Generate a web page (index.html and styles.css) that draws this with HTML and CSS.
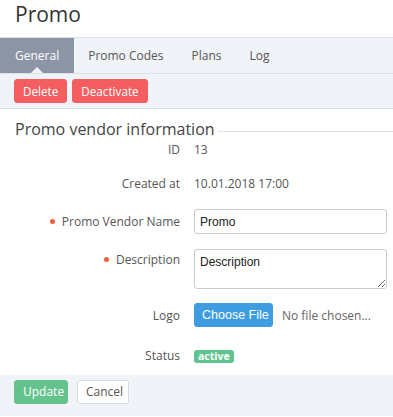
FILE: index.html
```html
<!DOCTYPE html>
<html lang="en">
<head>
    <meta charset="UTF-8">
    <meta name="viewport" content="width=device-width, initial-scale=1.0">
    <title>Promo</title>
    <link rel="stylesheet" href="styles.css">
</head>
<body>
    <h1 class="page-title">Promo</h1>

    <div class="tabs">
        <a class="tab active">General</a>
        <a class="tab">Promo Codes</a>
        <a class="tab">Plans</a>
        <a class="tab">Log</a>
    </div>

    <div class="toolbar">
        <button class="btn btn-red">Delete</button>
        <button class="btn btn-red">Deactivate</button>
    </div>

    <form class="form">
        <h3 class="section-title"><span>Promo vendor information</span></h3>

        <div class="row row-text">
            <label>ID</label>
            <div class="value">13</div>
        </div>
        <div class="row row-text">
            <label>Created at</label>
            <div class="value">10.01.2018 17:00</div>
        </div>
        <div class="row row-input">
            <label class="required">Promo Vendor Name</label>
            <div class="value"><input type="text" value="Promo"></div>
        </div>
        <div class="row row-area">
            <label class="required">Description</label>
            <div class="value"><textarea>Description</textarea></div>
        </div>
        <div class="row row-file">
            <label>Logo</label>
            <div class="value">
                <span class="btn btn-blue">Choose File</span>
                <span class="file-name">No file chosen...</span>
            </div>
        </div>
        <div class="row row-status">
            <label>Status</label>
            <div class="value"><span class="badge">active</span></div>
        </div>
    </form>

    <div class="footer">
        <button class="btn btn-green">Update</button>
        <button class="btn btn-white">Cancel</button>
    </div>
</body>
</html>
```

FILE: styles.css
```css
* {
    margin: 0;
    padding: 0;
    box-sizing: border-box;
}

body {
    font-family: "Open Sans", sans-serif;
    font-size: 12px;
    color: #555;
    background: #fff;
}

.page-title {
    font-size: 21px;
    font-weight: normal;
    color: #333;
    height: 38px;
    line-height: 29px;
    padding-left: 15px;
    border-bottom: 1px solid #dde1e6;
}

.tabs {
    display: flex;
    height: 36px;
    background: #f0f3f7;
    border-bottom: 1px solid #dde1e6;
}

.tab {
    position: relative;
    padding: 0 14px;
    line-height: 35px;
    color: #555;
}

.tab.active {
    background: #8c95a5;
    color: #fff;
    padding: 0 15px;
}

.tab.active::after {
    content: "";
    position: absolute;
    left: 50%;
    bottom: 0;
    margin-left: -6px;
    border: 6px solid transparent;
    border-bottom-color: #f0f3f7;
    border-top: 0;
}

.toolbar {
    display: flex;
    gap: 5px;
    height: 35px;
    padding: 5px 14px 0;
    background: #f0f3f7;
    border-bottom: 1px solid #dde1e6;
}

.btn {
    display: inline-block;
    height: 24px;
    padding: 0 8px;
    border: 1px solid transparent;
    border-radius: 3px;
    font-family: "Open Sans", sans-serif;
    font-size: 12px;
    line-height: 22px;
    color: #fff;
    cursor: pointer;
}

.btn-red {
    background: #f45e60;
    border-color: #f45e60;
    font-size: 11.7px;
}

.btn-blue {
    background: #3e9de0;
    border-color: #3e9de0;
    font-family: "Liberation Sans", Arial, sans-serif;
    font-size: 12.5px;
    padding: 0 7px;
    width: 79px;
    text-align: center;
}

.btn-green {
    background: #64c38d;
    border-color: #64c38d;
    width: 54px;
}

.btn-white {
    background: #fff;
    border-color: #d7dbe0;
    color: #555;
    width: 52px;
}

.form {
    padding-top: 13px;
}

.section-title {
    display: flex;
    align-items: center;
    font-size: 16px;
    font-weight: normal;
    color: #444;
    padding-left: 15px;
    height: 15px;
    line-height: 15px;
}

.section-title::after {
    content: "";
    flex: 1;
    height: 1px;
    margin-left: 3px;
    margin-top: 4px;
    background: #dde1e6;
}

.row {
    display: flex;
    gap: 14px;
}

.row label {
    width: 180px;
    text-align: right;
}

.row .value {
    flex: 1;
    padding-right: 6px;
    white-space: nowrap;
}

.row-text {
    height: 24px;
    align-items: center;
}

.row-text + .row-text {
    margin-top: 10px;
}

.row-input {
    margin-top: 14px;
    height: 25px;
    align-items: center;
}

.row-area {
    margin-top: 15px;
}

.row-area label {
    padding-top: 2px;
}

.required::before {
    content: "";
    display: inline-block;
    width: 5px;
    height: 5px;
    border-radius: 50%;
    background: #f0603a;
    margin-right: 7px;
    vertical-align: 2px;
}

input,
textarea {
    display: block;
    width: 100%;
    border: 1px solid #c9cdd4;
    border-radius: 3px;
    padding: 4px 5px;
    font-family: "Liberation Sans", Arial, sans-serif;
    font-size: 12px;
    color: #222;
}

input {
    height: 25px;
}

textarea {
    height: 40px;
    padding-top: 5px;
}

.row-file {
    margin-top: 14px;
    align-items: center;
    height: 24px;
}

.row-file .value {
    display: flex;
    align-items: center;
}

.file-name {
    margin-left: 9px;
    color: #666;
}

.row-status {
    margin-top: 16px;
    align-items: center;
    height: 24px;
}

.badge {
    display: inline-block;
    background: #5fc48f;
    color: #fff;
    font-weight: bold;
    font-size: 10.5px;
    line-height: 13px;
    padding: 0 4px;
    border-radius: 3px;
    vertical-align: middle;
}

.footer {
    margin-top: 8px;
    height: 41px;
    display: flex;
    gap: 9px;
    padding: 5px 14px 0;
    background: #f0f3f7;
}
```
